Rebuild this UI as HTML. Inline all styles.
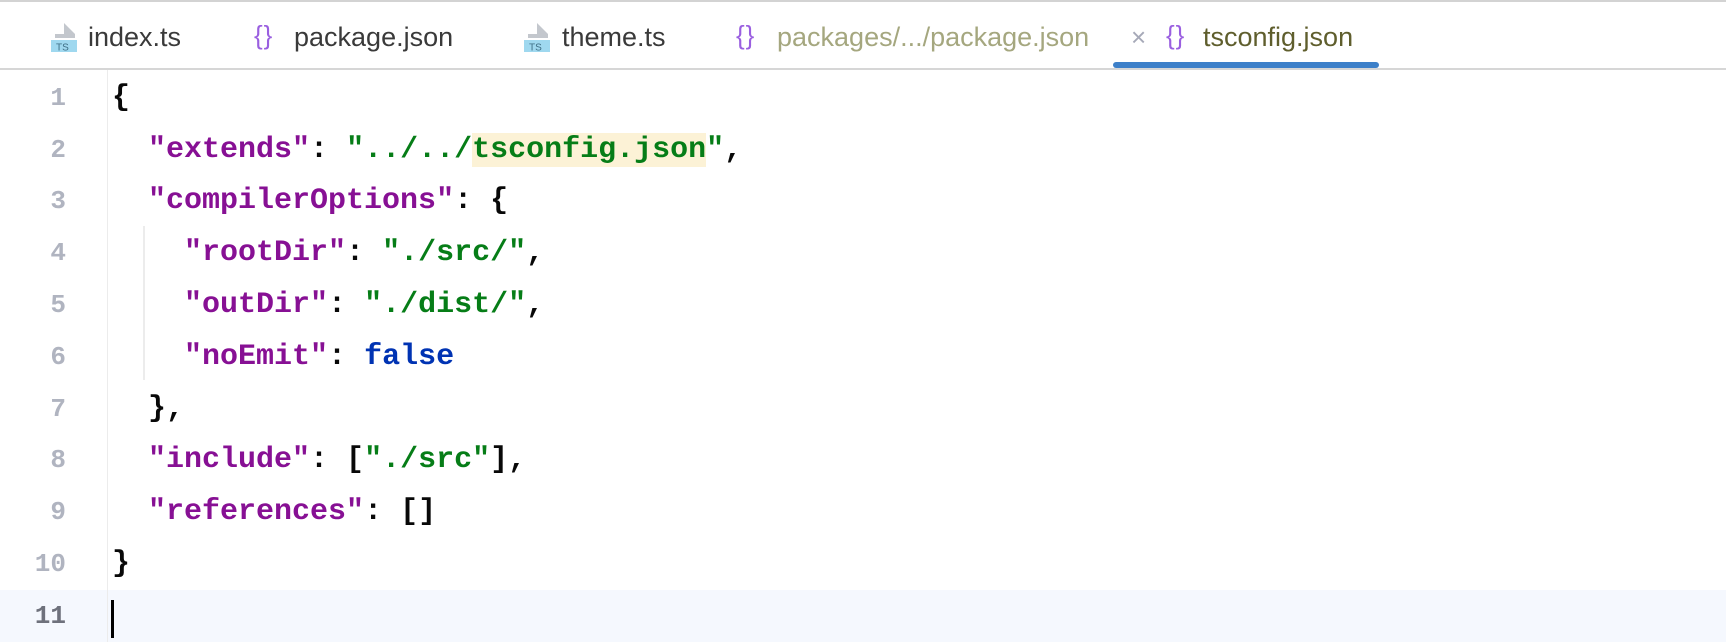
<!DOCTYPE html>
<html><head><meta charset="utf-8"><style>
html,body{margin:0;padding:0;background:#fff;width:1726px;height:642px;overflow:hidden;position:relative}
.top{position:absolute;left:0;top:0;width:1726px;height:2px;background:#d3d3d3}
.tabbar{position:absolute;left:0;top:2px;width:1726px;height:66px;border-bottom:2px solid #d6d6d6}
.tab{position:absolute;top:21px;font-family:"Liberation Sans",sans-serif;font-size:27px;line-height:32px;color:#3a3a3a;white-space:nowrap}
.br{position:absolute;top:20px;font-family:"Liberation Sans",sans-serif;font-size:26px;line-height:30px;color:#9a5fe0;letter-spacing:1px}
.ul{position:absolute;left:1113px;top:62px;width:266px;height:6px;border-radius:3px;background:#3d80c9}
.gsep{position:absolute;left:107px;top:70px;width:1px;height:572px;background:#ececec}
.cur{position:absolute;left:0;top:590px;width:1726px;height:52px;background:#f5f8fe}
.ln{position:absolute;left:0;width:66px;text-align:right;font-family:"Liberation Mono",monospace;font-weight:bold;font-size:26px;color:#b0b4c0;line-height:52px}
.code{position:absolute;left:112px;font-family:"Liberation Mono",monospace;font-weight:bold;font-size:30px;line-height:52px;color:#080808;white-space:pre}
.k{color:#871094}.s{color:#067d17}.b{color:#0033b3}
.hl{background:#fcf2d6}
.guide{position:absolute;left:143px;top:226px;width:2px;height:154px;background:#ececec}
.caret{position:absolute;left:111px;top:600px;width:3px;height:38px;background:#000}
</style></head><body>
<div class="top"></div>
<div class="tabbar"></div>
<svg style="position:absolute;left:51px;top:22px" width="26" height="30"><path d="M13 1 L13 12 L24 12 Z" fill="#c3c7cd"/><rect x="4" y="12" width="20" height="4" fill="#c3c7cd"/><rect x="0" y="18" width="26" height="12" fill="#9fd8ef"/><text x="5" y="28.5" font-family="Liberation Sans,sans-serif" font-size="10" fill="#3f6f86">TS</text></svg>
<div class="tab" style="left:88px">index.ts</div>
<div class="br" style="left:254px">{}</div>
<div class="tab" style="left:294px">package.json</div>
<svg style="position:absolute;left:524px;top:22px" width="26" height="30"><path d="M13 1 L13 12 L24 12 Z" fill="#c3c7cd"/><rect x="4" y="12" width="20" height="4" fill="#c3c7cd"/><rect x="0" y="18" width="26" height="12" fill="#9fd8ef"/><text x="5" y="28.5" font-family="Liberation Sans,sans-serif" font-size="10" fill="#3f6f86">TS</text></svg>
<div class="tab" style="left:562px">theme.ts</div>
<div class="br" style="left:736px">{}</div>
<div class="tab" style="left:777px;color:#a5a77f">packages/.../package.json</div>
<div class="tab" style="left:1131px;color:#a6a9b8;font-size:26px">×</div>
<div class="br" style="left:1166px">{}</div>
<div class="tab" style="left:1203px;color:#5f5e2d">tsconfig.json</div>
<div class="ul"></div>
<div class="cur"></div>
<div class="gsep"></div>
<div class="guide"></div>
<div class="ln" style="top:72px">1</div>
<div class="ln" style="top:124px">2</div>
<div class="ln" style="top:175px">3</div>
<div class="ln" style="top:227px">4</div>
<div class="ln" style="top:279px">5</div>
<div class="ln" style="top:331px">6</div>
<div class="ln" style="top:383px">7</div>
<div class="ln" style="top:434px">8</div>
<div class="ln" style="top:486px">9</div>
<div class="ln" style="top:538px">10</div>
<div class="ln" style="top:590px;color:#6e717c">11</div>
<div class="code" style="top:72px">{</div>
<div class="code" style="top:124px">  <span class="k">"extends"</span>: <span class="s">"../../<span class="hl">tsconfig.json</span>"</span>,</div>
<div class="code" style="top:175px">  <span class="k">"compilerOptions"</span>: {</div>
<div class="code" style="top:227px">    <span class="k">"rootDir"</span>: <span class="s">"./src/"</span>,</div>
<div class="code" style="top:279px">    <span class="k">"outDir"</span>: <span class="s">"./dist/"</span>,</div>
<div class="code" style="top:331px">    <span class="k">"noEmit"</span>: <span class="b">false</span></div>
<div class="code" style="top:383px">  },</div>
<div class="code" style="top:434px">  <span class="k">"include"</span>: [<span class="s">"./src"</span>],</div>
<div class="code" style="top:486px">  <span class="k">"references"</span>: []</div>
<div class="code" style="top:538px">}</div>
<div class="caret"></div>
</body></html>
